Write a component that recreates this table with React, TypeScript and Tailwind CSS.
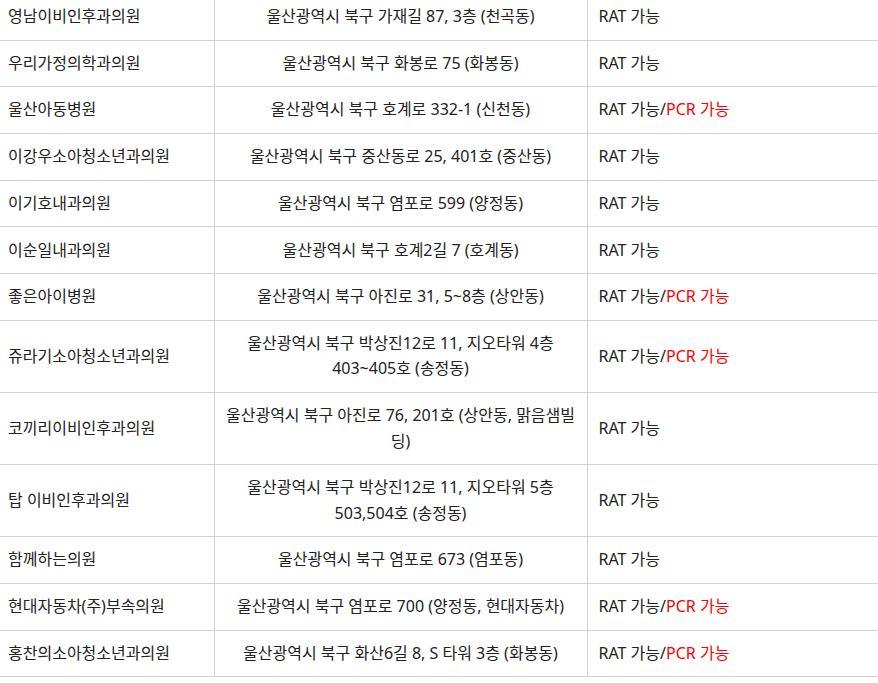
import React from "react"

type Row = { name: string; addr: React.ReactNode; pcr: boolean }

// 울산 북구 신속항원검사(RAT)/PCR 가능 의료기관 목록
const rows: Row[] = [
  { name: "영남이비인후과의원", addr: "울산광역시 북구 가재길 87, 3층 (천곡동)", pcr: false },
  { name: "우리가정의학과의원", addr: "울산광역시 북구 화봉로 75 (화봉동)", pcr: false },
  { name: "울산아동병원", addr: "울산광역시 북구 호계로 332-1 (신천동)", pcr: true },
  { name: "이강우소아청소년과의원", addr: "울산광역시 북구 중산동로 25, 401호 (중산동)", pcr: false },
  { name: "이기호내과의원", addr: "울산광역시 북구 염포로 599 (양정동)", pcr: false },
  { name: "이순일내과의원", addr: "울산광역시 북구 호계2길 7 (호계동)", pcr: false },
  { name: "좋은아이병원", addr: "울산광역시 북구 아진로 31, 5~8층 (상안동)", pcr: true },
  {
    name: "쥬라기소아청소년과의원",
    addr: (
      <>
        울산광역시 북구 박상진12로 11, 지오타워 4층
        <br />
        403~405호 (송정동)
      </>
    ),
    pcr: true,
  },
  {
    name: "코끼리이비인후과의원",
    addr: (
      <>
        울산광역시 북구 아진로 76, 201호 (상안동, 맑음샘빌
        <br />
        딩)
      </>
    ),
    pcr: false,
  },
  {
    name: "탑 이비인후과의원",
    addr: (
      <>
        울산광역시 북구 박상진12로 11, 지오타워 5층
        <br />
        503,504호 (송정동)
      </>
    ),
    pcr: false,
  },
  { name: "함께하는의원", addr: "울산광역시 북구 염포로 673 (염포동)", pcr: false },
  { name: "현대자동차(주)부속의원", addr: "울산광역시 북구 염포로 700 (양정동, 현대자동차)", pcr: true },
  { name: "홍찬의소아청소년과의원", addr: "울산광역시 북구 화산6길 8, S 타워 3층 (화봉동)", pcr: true },
]

export default function App() {
  return (
    <div
      className="w-[878px] h-[683px] overflow-hidden bg-white text-[#222] text-[16px] leading-[25.5px]"
      style={{ fontFamily: '"Noto Sans", "Noto Sans CJK KR", sans-serif' }}
    >
      <table className="-mt-[7px] w-[878px] border-collapse table-fixed">
        <colgroup>
          <col className="w-[214px]" />
          <col className="w-[373px]" />
          <col />
        </colgroup>
        <tbody>
          {rows.map((r) => (
            <tr key={r.name} className="border-y border-[#d3d3d3]">
              <td className="border-r border-[#d3d3d3] pl-2 pr-2 py-[10.1px] align-middle">
                {r.name}
              </td>
              <td className="border-r border-[#d3d3d3] px-2 py-[10.1px] text-center align-middle whitespace-nowrap">
                {r.addr}
              </td>
              <td className="pl-[11px] py-[10.1px] align-middle">
                RAT 가능
                {r.pcr && (
                  <>
                    /<span className="text-[#ff0000]">PCR 가능</span>
                  </>
                )}
              </td>
            </tr>
          ))}
        </tbody>
      </table>
    </div>
  )
}
